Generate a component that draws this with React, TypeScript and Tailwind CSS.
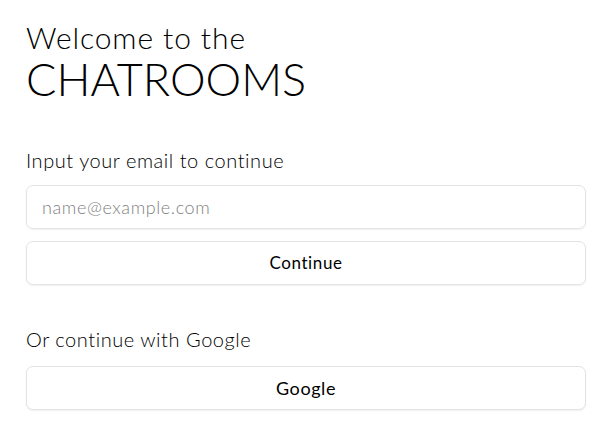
import React from "react";

export default function App() {
  const font = { fontFamily: "Lato, 'Open Sans', sans-serif" };
  return (
    <div className="min-h-[440px] w-[608px] bg-white text-black" style={font}>
      <div className="px-[26px] pt-[19px]">
        <h1 className="font-light leading-none">
          <span className="block text-[30px] leading-[36px] tracking-[0.9px]">Welcome to the</span>
          <span className="block text-[45px] leading-[48px] tracking-[0px]">CHATROOMS</span>
        </h1>
        <p className="mt-[45px] text-[20px] font-light leading-[24px] tracking-[0.55px] text-black">Input your email to continue</p>
        <input
          className="mt-[13px] block h-[44px] w-[560px] rounded-[7px] border border-[#e3e3e3] px-[15px] text-[18px] font-light tracking-[0.6px] text-black placeholder:text-[#808080] shadow-[0_1px_2px_rgba(0,0,0,0.06)] outline-none"
          placeholder="name@example.com"
          style={font}
        />
        <button
          className="mt-[12px] block h-[44px] w-[560px] rounded-[7px] border border-[#e3e3e3] bg-white text-[17px] font-normal tracking-[0.6px] text-black shadow-[0_1px_2px_rgba(0,0,0,0.06)]"
          style={font}
        >
          Continue
        </button>
        <p className="mt-[42px] text-[20px] font-light leading-[24px] tracking-[0.55px] text-black">Or continue with Google</p>
        <button
          className="mt-[15px] block h-[44px] w-[560px] rounded-[7px] border border-[#e3e3e3] bg-white text-[18px] font-normal tracking-[0.6px] text-black shadow-[0_1px_2px_rgba(0,0,0,0.06)]"
          style={font}
        >
          Google
        </button>
      </div>
    </div>
  );
}
